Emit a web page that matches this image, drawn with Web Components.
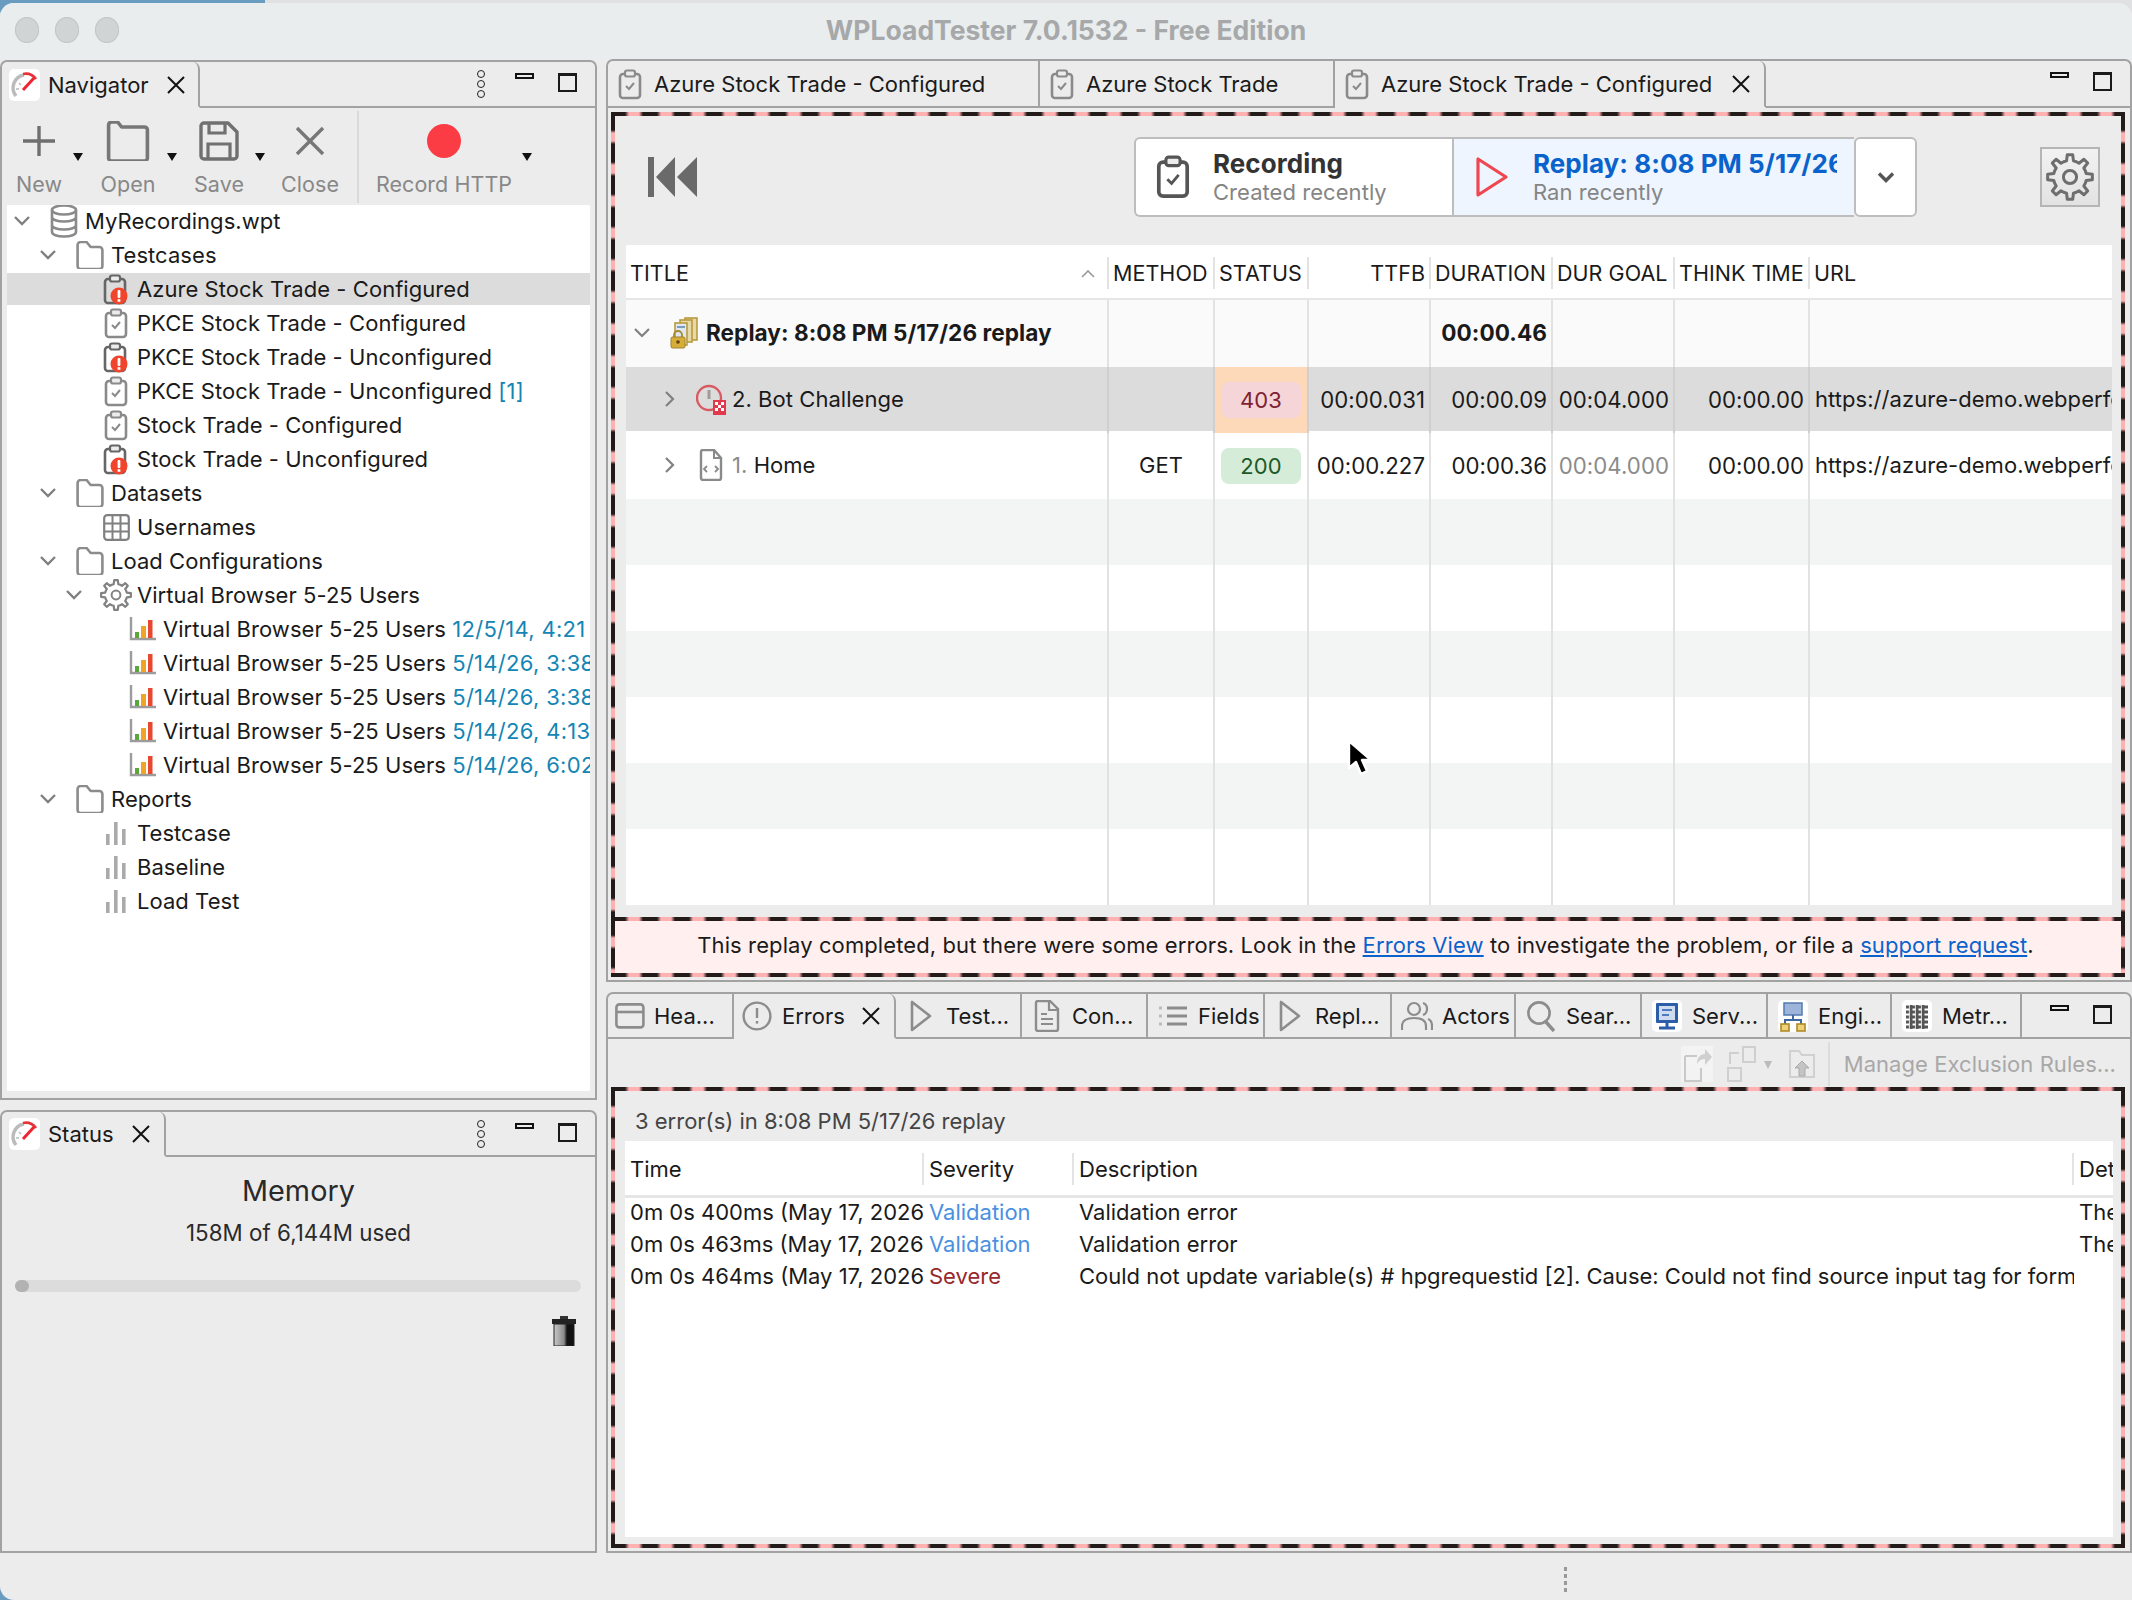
<!DOCTYPE html>
<html>
<head>
<meta charset="utf-8">
<title>WPLoadTester</title>
<style>
  html, body { margin: 0; padding: 0; }
  body {
    width: 2132px; height: 1600px; overflow: hidden;
    background: linear-gradient(90deg, #6a9cc0 0 265px, #dfe1e2 265px);
    font: 22px Inter, "Liberation Sans", sans-serif; color: #1a1a1a;
    letter-spacing: .05px;
  }
</style>
</head>
<body>
<wp-app></wp-app>

<script>
// icons, all drawn by hand
function svg(w, h, vb, body) {
  return `<svg xmlns="http://www.w3.org/2000/svg" width="${w}" height="${h}" viewBox="${vb}" style="display:block">${body}</svg>`;
}
function gearPath(cx, cy, ro, ri, teeth) {
  let d = '';
  const step = Math.PI * 2 / teeth;
  for (let i = 0; i < teeth; i++) {
    const a = i * step - Math.PI / 2;
    const pts = [[ri, a - step * .5], [ri, a - step * .27], [ro, a - step * .15], [ro, a + step * .15], [ri, a + step * .27]];
    pts.forEach((p, j) => {
      d += (i === 0 && j === 0 ? 'M' : 'L') + (cx + p[0] * Math.cos(p[1])).toFixed(1) + ' ' + (cy + p[0] * Math.sin(p[1])).toFixed(1);
    });
  }
  return d + 'Z';
}
const clipBody = (c, check) => `<rect x="2" y="5" width="20" height="24" rx="3" fill="none" stroke="${c}" stroke-width="2.6"/><rect x="7" y="1.5" width="10" height="6" rx="2" fill="#ececec" stroke="${c}" stroke-width="2.2"/>${check ? `<path d="M8 17l3 3 5-6" fill="none" stroke="${c}" stroke-width="2"/>` : ''}`;
const errDot = `<circle cx="16" cy="22" r="8.5" fill="#f0442c"/><rect x="14.6" y="16" width="2.8" height="8" rx="1" fill="#fff"/><rect x="14.6" y="25.2" width="2.8" height="2.6" fill="#fff"/>`;
const folderPath = (w, h, c, sw) => `<path d="M${sw} ${h - 3}V4a3 3 0 0 1 3-3h6l4 5h${w - 16 - 2 * sw}a3 3 0 0 1 3 3v${h - 12}a3 3 0 0 1-3 3H${sw + 3}a3 3 0 0 1-3-3z" fill="none" stroke="${c}" stroke-width="${sw}" stroke-linejoin="round"/>`;
const gaugeIcon = svg(31, 32, '0 0 31 32', `<rect width="31" height="32" rx="5" fill="#fff"/><path d="M7 27A13 13 0 0 1 15 6" fill="none" stroke="#bbb" stroke-width="3.5"/><path d="M14 5a13 13 0 0 1 13 5" fill="none" stroke="#e8323a" stroke-width="2.6"/><path d="M14 21l11-12" stroke="#ee2530" stroke-width="3"/><path d="M10 14l2 2M7 20l3 0" stroke="#bbb" stroke-width="1.6"/>`);

const ICONS = {
  gauge: gaugeIcon,
  plus: svg(32, 32, '0 0 32 32', `<path d="M16 1v30M0 16h32" stroke="#6f6f6f" stroke-width="3.4"/>`),
  folderBig: svg(46, 40, '0 0 46 40', folderPath(46, 40, '#777', 3.6)),
  save: svg(40, 40, '0 0 40 40', `<path d="M2 5a3 3 0 0 1 3-3h24l9 9v24a3 3 0 0 1-3 3H5a3 3 0 0 1-3-3z" fill="none" stroke="#707070" stroke-width="3.4" stroke-linejoin="round"/><path d="M10 3v9h16V3M9 37V23h22v14" fill="none" stroke="#707070" stroke-width="3.2"/>`),
  closeBig: svg(30, 30, '0 0 30 30', `<path d="M2 2l26 26M28 2L2 28" stroke="#777" stroke-width="3.4"/>`),
  rec: svg(36, 36, '0 0 36 36', `<circle cx="18" cy="18" r="17" fill="#fb3c44"/>`),
  db: svg(28, 34, '0 0 28 34', `<g fill="none" stroke="#8a8a8a" stroke-width="2.6"><ellipse cx="14" cy="6" rx="12" ry="4.5"/><path d="M2 6v22c0 2.5 5 4.5 12 4.5s12-2 12-4.5V6M2 13c0 2.5 5 4.5 12 4.5s12-2 12-4.5M2 21c0 2.5 5 4.5 12 4.5s12-2 12-4.5"/></g>`),
  folder: svg(30, 28, '0 0 30 28', folderPath(30, 28, '#8c8c8c', 2.6)),
  clip: svg(24, 31, '0 0 24 31', clipBody('#8a8a8a', true)),
  clipDark: svg(36, 44, '0 0 24 31', clipBody('#555', true)),
  clipErr: svg(26, 31, '0 0 26 31', clipBody('#666', false) + errDot),
  grid: svg(27, 27, '0 0 27 27', `<rect x="1.2" y="1.2" width="24.6" height="24.6" rx="3" fill="none" stroke="#808080" stroke-width="2.2"/><path d="M1 9.5h25M1 17.5h25M9.5 1v25M17.5 1v25" stroke="#808080" stroke-width="2"/>`),
  gear: svg(32, 32, '0 0 32 32', `<path d="${gearPath(16, 16, 15, 11, 8)}" fill="none" stroke="#828282" stroke-width="2.2" stroke-linejoin="round"/><circle cx="16" cy="16" r="4.4" fill="none" stroke="#828282" stroke-width="2"/>`),
  gearBig: svg(48, 48, '0 0 32 32', `<path d="${gearPath(16, 16, 15, 11, 8)}" fill="none" stroke="#6e6e6e" stroke-width="2" stroke-linejoin="round"/><circle cx="16" cy="16" r="4.4" fill="none" stroke="#6e6e6e" stroke-width="2"/>`),
  chart: svg(27, 24, '0 0 27 24', `<path d="M2 0v22h25" fill="none" stroke="#9c9c9c" stroke-width="2.4"/><rect x="6" y="15" width="4" height="6" fill="#5aa83c"/><rect x="12" y="9" width="5" height="12" fill="#f0a326"/><rect x="19" y="3" width="4.5" height="18" fill="#e8492e"/>`),
  bars: svg(22, 26, '0 0 22 26', `<rect x="1" y="14" width="3.6" height="11" fill="#aaa"/><rect x="9" y="2" width="3.6" height="23" fill="#aaa"/><rect x="17" y="9" width="3.6" height="16" fill="#aaa"/>`),
  skip: svg(50, 40, '0 0 50 40', `<rect width="6" height="40" fill="#6a6a6a"/><path d="M27 0v40L8 20zM49 0v40L29 20z" fill="#6a6a6a"/>`),
  playRed: svg(32, 40, '0 0 32 40', `<path d="M2 2v36l28-18z" fill="none" stroke="#f04650" stroke-width="3.2" stroke-linejoin="round"/>`),
  stack: svg(28, 32, '0 0 28 32', `<g stroke="#b89a3c" stroke-width="1.6" fill="#e7d9a8"><rect x="15" y="1" width="12" height="22"/><rect x="10" y="3" width="12" height="22"/></g><rect x="5" y="6" width="12" height="22" fill="#dfe7f0" stroke="#b89a3c" stroke-width="1.6"/><path d="M7 10h8" stroke="#7d9ac0" stroke-width="2"/><path d="M4 21v-3a4 4 0 0 1 8 0v3" fill="none" stroke="#a88a30" stroke-width="1.8"/><rect x="1" y="20" width="14" height="11" rx="1.5" fill="#d7ad3a" stroke="#a0802a"/><circle cx="8" cy="25" r="1.8" fill="#5c4512"/>`),
  bot: svg(30, 32, '0 0 30 32', `<circle cx="13" cy="15" r="12" fill="none" stroke="#d85a62" stroke-width="2.4"/><rect x="11.5" y="7" width="3" height="9" fill="#a09a9a"/><rect x="17" y="17" width="13" height="15" fill="#e23a4c"/><path d="M19 19h3v3h-3zM25 19h3v3h-3zM22 22h3v3h-3zM19 25h3v3h-3zM25 25h3v3h-3z" fill="#fff"/>`),
  page: svg(24, 32, '0 0 24 32', `<path d="M2 3a2 2 0 0 1 2-2h11l7 8v20a2 2 0 0 1-2 2H4a2 2 0 0 1-2-2z" fill="none" stroke="#8a8a8a" stroke-width="2.4"/><path d="M15 1v8h7" fill="none" stroke="#8a8a8a" stroke-width="2"/><path d="M8 17l-3 3 3 3M16 17l3 3-3 3" fill="none" stroke="#8a8a8a" stroke-width="1.8"/>`),
  head: svg(30, 26, '0 0 30 26', `<rect x="1.4" y="1.4" width="27" height="23" rx="3" fill="none" stroke="#8c8c8c" stroke-width="2.6"/><path d="M1 9h28" stroke="#8c8c8c" stroke-width="2.6"/>`),
  err: svg(30, 30, '0 0 30 30', `<circle cx="15" cy="15" r="13.4" fill="none" stroke="#8c8c8c" stroke-width="2.4"/><rect x="13.8" y="7" width="2.4" height="10" fill="#8c8c8c"/><rect x="13.8" y="20" width="2.4" height="2.6" fill="#8c8c8c"/>`),
  play: svg(22, 32, '0 0 22 32', `<path d="M2 2v28l18-14z" fill="none" stroke="#8c8c8c" stroke-width="2.6" stroke-linejoin="round"/>`),
  doc: svg(26, 32, '0 0 26 32', `<path d="M2 3a2 2 0 0 1 2-2h12l8 8v20a2 2 0 0 1-2 2H4a2 2 0 0 1-2-2z" fill="none" stroke="#8c8c8c" stroke-width="2.4"/><path d="M15 1v9h9M7 14h6M7 19h12M7 24h12" fill="none" stroke="#8c8c8c" stroke-width="2.2"/>`),
  list: svg(28, 22, '0 0 28 22', `<path d="M8 3h20M8 11h20M8 19h20" stroke="#8c8c8c" stroke-width="3"/><path d="M0 3h3M0 11h3M0 19h3" stroke="#bbb" stroke-width="3"/>`),
  actors: svg(32, 30, '0 0 32 30', `<g fill="none" stroke="#8c8c8c" stroke-width="2.2"><circle cx="13" cy="8" r="6"/><path d="M1 29v-4c0-5 4-8 12-8s12 3 12 8v4M22 2c3 1 4 4 4 6s-1 5-4 6M27 18c3 1 4 4 4 7v4"/></g>`),
  search: svg(28, 32, '0 0 28 32', `<circle cx="12" cy="13" r="10.6" fill="none" stroke="#8c8c8c" stroke-width="2.6"/><path d="M19 22l8 9" stroke="#8c8c8c" stroke-width="3.4"/>`),
  server: svg(30, 32, '0 0 30 32', `<rect width="30" height="32" rx="5" fill="#fff"/><rect x="4" y="3" width="22" height="20" rx="1" fill="#2c5ea8"/><rect x="7" y="6" width="16" height="14" fill="#cfdcf0"/><path d="M10 10h10M10 15h7" stroke="#4f7cc0" stroke-width="2"/><path d="M15 23v4M7 28h16" stroke="#2c5ea8" stroke-width="3"/>`),
  engine: svg(30, 32, '0 0 30 32', `<rect width="30" height="32" rx="5" fill="#fff"/><rect x="6" y="3" width="18" height="12" fill="#9db5da" stroke="#5479b0" stroke-width="1.5"/><path d="M15 15v5M7 25v-5h16v5" fill="none" stroke="#3f67a0" stroke-width="2"/><rect x="3" y="24" width="8" height="7" fill="#f0d078" stroke="#ad8a22" stroke-width="1.6"/><rect x="19" y="24" width="8" height="7" fill="#f0d078" stroke="#ad8a22" stroke-width="1.6"/>`),
  metric: svg(30, 32, '0 0 30 32', `<rect width="30" height="32" rx="5" fill="#fff"/><path d="M4 7h22M4 12h22M4 17h22M4 22h22M4 27h22M9 5v24M15 5v24M21 5v24" stroke="#555" stroke-width="3"/><path d="M7.4 5v24M13.4 5v24M19.4 5v24" stroke="#fff" stroke-width=".8"/>`),
  trash: svg(24, 30, '0 0 24 30', `<defs><linearGradient id="tr" x1="0" x2="1"><stop offset="0" stop-color="#c8c8c8"/><stop offset=".5" stop-color="#8a8a8a"/><stop offset=".65" stop-color="#111"/></linearGradient></defs><rect x="8" y="0" width="8" height="4" fill="#333"/><rect x="0" y="3" width="24" height="5" fill="#222"/><rect x="2" y="8" width="20" height="22" fill="url(#tr)" stroke="#222"/>`),
  share: svg(32, 36, '0 0 32 36', `<rect x="0" y="0" width="32" height="36" fill="#f3f3f3"/><path d="M4 10h12M4 10v25h16V22" fill="none" stroke="#c9c9c9" stroke-width="2"/><path d="M16 18c0-7 4-10 8-10V3l7 8-7 8v-6c-3 0-6 1-8 5z" fill="#cfcfcf"/>`),
  layout: svg(30, 36, '0 0 30 36', `<g fill="none" stroke="#cfcfcf" stroke-width="2"><rect x="17" y="1" width="12" height="15"/><rect x="2" y="22" width="13" height="13"/><path d="M4 18V7h9"/></g>`),
  fold: svg(28, 34, '0 0 28 34', `<path d="M2 30V4h9l3 4h12v22z" fill="none" stroke="#d0d0d0" stroke-width="2"/><path d="M14 14l7 7h-4v8h-6v-8H7z" fill="#c4c4c4" stroke="#aaa"/>`),
  cursor: svg(26, 40, '0 0 26 40', `<path d="M3 2v27l7-6 5 12 6-3-5-11h9z" fill="#000" stroke="#fff" stroke-width="2.4" stroke-linejoin="round"/>`)
};

class WpIcon extends HTMLElement {
  connectedCallback() {
    this.attachShadow({ mode: 'open' });
    this.shadowRoot.innerHTML = `<style>:host{display:inline-flex;align-items:center;justify-content:center;flex:none}</style>${ICONS[this.getAttribute('name')] || ''}`;
  }
}

class WpTitlebar extends HTMLElement {
  constructor() {
    super();
    this.attachShadow({ mode: 'open' });
    this.shadowRoot.innerHTML = `
      <style>
        :host { display: flex; align-items: center; position: relative; height: 56px; background: #e9edee; }
        .lights { display: flex; gap: 16px; padding-left: 15px; margin-top: -2px; }
        .lights i { width: 24px; height: 26px; border-radius: 50%; background: #d1d4d5; box-shadow: inset 0 0 0 1px #c3c6c7; }
        .t { position: absolute; left: 0; right: 0; top: 12px; text-align: center; font-weight: 700; font-size: 26.5px; line-height: 30px; color: #a6a8a9; letter-spacing: 0; }
      </style>
      <div class="lights"><i></i><i></i><i></i></div>
      <div class="t"><slot></slot></div>`;
  }
}

// panel: tab strip with view buttons on its right, then the body
class WpPanel extends HTMLElement {
  constructor() {
    super();
    this.attachShadow({ mode: 'open' });
    this.shadowRoot.innerHTML = `
      <style>
        :host { display: flex; flex-direction: column; box-sizing: border-box; border: 2px solid #a2a2a2; border-radius: 7px 7px 0 0; background: #ececec; min-height: 0; }
        .strip { display: flex; height: var(--strip, 47px); flex: none; }
        .fill { flex: 1; border-bottom: 2px solid #a2a2a2; display: flex; justify-content: flex-end; align-items: flex-start; padding-top: 8px; box-sizing: border-box; }
        .dots { display: flex; flex-direction: column; gap: 2px; margin-right: 30px; }
        .dots i { width: 6px; height: 6px; border: 1.5px solid #222; border-radius: 50%; }
        .min { width: 15px; height: 2px; border: 2px solid #111; margin-top: 3px; margin-right: 24px; }
        .max { width: 15px; height: 14px; border: 2px solid #1a1a1a; border-top-width: 3px; margin-top: 3px; }
        .end { width: 18px; flex: none; }
        .body { flex: 1; min-height: 0; display: flex; flex-direction: column; }
        :host([nodots]) .dots { display: none; }
      </style>
      <div class="strip">
        <slot name="tabs"></slot>
        <div class="fill">
          <div class="dots"><i></i><i></i><i></i></div>
          <div class="min"></div><div class="max"></div><div class="end"></div>
        </div>
      </div>
      <div class="body"><slot></slot></div>`;
  }
}

class WpTab extends HTMLElement {
  connectedCallback() {
    const icon = this.getAttribute('icon');
    const box = this.getAttribute('box') || '32';
    const closable = this.hasAttribute('close');
    this.attachShadow({ mode: 'open' });
    this.shadowRoot.innerHTML = `
      <style>
        :host { display: flex; align-items: center; box-sizing: border-box; height: var(--strip, 47px); width: ${this.getAttribute('w')}px; flex: none; padding: 1px 0 0 6px; border-right: 2px solid #a2a2a2; border-bottom: 2px solid #a2a2a2; font-size: 22px; white-space: nowrap; overflow: hidden; letter-spacing: 0; }
        :host([active]) { border-bottom-color: transparent; border-top-right-radius: 7px; }
        .ic { width: ${box}px; display: flex; justify-content: center; margin-right: 8px; flex: none; }
        .x { margin-left: auto; margin-right: var(--x-right, 14px); }
      </style>
      <span class="ic"><wp-icon name="${icon}"></wp-icon></span><slot></slot>
      ${closable ? `<svg class="x" width="18" height="18" viewBox="0 0 18 18"><path d="M1 1l16 16M17 1L1 17" stroke="#111" stroke-width="2"/></svg>` : ''}`;
  }
}

class ToolButton extends HTMLElement {
  connectedCallback() {
    const caret = this.getAttribute('caret');
    this.attachShadow({ mode: 'open' });
    this.shadowRoot.innerHTML = `
      <style>
        :host { display: flex; flex-direction: column; align-items: center; position: relative; flex: none; color: #888; font-size: 21.5px; padding-top: 13px; box-sizing: border-box; height: 97px; }
        .i { height: 40px; display: flex; align-items: center; }
        .l { margin-top: 10px; line-height: 26px; white-space: nowrap; }
        .c { position: absolute; left: ${caret}px; top: 45px; width: 0; height: 0; border: 5px solid transparent; border-top: 8px solid #111; border-bottom: 0; }
      </style>
      <div class="i"><slot></slot></div>
      <div class="l">${this.getAttribute('label')}</div>
      ${caret ? '<div class="c"></div>' : ''}`;
  }
}

class TreeRow extends HTMLElement {
  connectedCallback() {
    const lvl = +this.getAttribute('level');
    const open = this.hasAttribute('open');
    this.attachShadow({ mode: 'open' });
    this.shadowRoot.innerHTML = `
      <style>
        :host { display: flex; align-items: center; box-sizing: border-box; height: 34px; padding-left: ${2 + 26 * lvl}px; white-space: nowrap; font-size: 22px; border-bottom: 2px solid transparent; background-clip: padding-box; }
        :host([sel]) { background-color: #dcdcdc; }
        .ch { width: 26px; flex: none; display: flex; justify-content: center; }
        .ic { width: 36px; margin-left: 11px; flex: none; display: flex; justify-content: center; margin-right: 3px; }
        ::slotted(b) { font-weight: 400; color: #1485b4; letter-spacing: .3px; }
      </style>
      <span class="ch">${open ? `<svg width="16" height="10" viewBox="0 0 16 10"><path d="M1 1l7 7 7-7" fill="none" stroke="#808080" stroke-width="2.4"/></svg>` : ''}</span>
      <span class="ic"><wp-icon name="${this.getAttribute('icon')}"></wp-icon></span>
      <span><slot></slot></span>`;
  }
}

class NavTree extends HTMLElement {
  constructor() {
    super();
    this.attachShadow({ mode: 'open' });
    this.shadowRoot.innerHTML = `
      <style>:host { display: block; flex: 1; background: #fff; margin: 0 5px 7px 5px; overflow: hidden; min-height: 0; }</style>
      <slot></slot>`;
  }
}

// black and pink dashed frame the app draws round problem areas
const DASH_H = 'repeating-linear-gradient(90deg, #231a1a 0 14px, #ffb0b0 18px 28px, #231a1a 32px)';
const DASH_V = 'repeating-linear-gradient(180deg, #231a1a 0 18px, #ffb0b0 21px 29px, #231a1a 32px)';

class DashBox extends HTMLElement {
  constructor() {
    super();
    this.attachShadow({ mode: 'open' });
    this.shadowRoot.innerHTML = `
      <style>
        :host {
          display: flex; flex-direction: column; box-sizing: border-box; min-height: 0; padding: 4px;
          background:
            ${DASH_H} top / 100% 4px no-repeat,
            ${DASH_H} bottom / 100% 4px no-repeat,
            ${DASH_V} left / 4px 100% no-repeat,
            ${DASH_V} right / 4px 100% no-repeat;
        }
        :host([open-bottom]) { padding-bottom: 0; background:
            ${DASH_H} top / 100% 4px no-repeat,
            ${DASH_V} left / 4px 100% no-repeat,
            ${DASH_V} right / 4px 100% no-repeat; }
      </style>
      <slot></slot>`;
  }
}

class ReplayBar extends HTMLElement {
  constructor() {
    super();
    this.attachShadow({ mode: 'open' });
    this.shadowRoot.innerHTML = `
      <style>
        :host { display: flex; align-items: flex-start; height: 129px; flex: none; box-sizing: border-box; padding: 21px 0 0 33px; position: relative; }
        .skip { margin-top: 20px; }
        .card { display: flex; margin-left: 436px; height: 80px; box-sizing: border-box; border: 2px solid #bdbdbd; border-right: 0; border-radius: 6px 0 0 6px; background: #fff; }
        .a { width: 318px; display: flex; align-items: center; box-sizing: border-box; padding-left: 19px; border-right: 2px solid #bdbdbd; }
        .b { width: 400px; display: flex; align-items: center; box-sizing: border-box; padding-left: 22px; background: #eef5fe; }
        .tx { margin-left: 22px; overflow: hidden; }
        .b .tx { margin-left: 25px; width: 304px; }
        .h { font-size: 26px; font-weight: 700; line-height: 31px; color: #333; white-space: nowrap; }
        .b .h { color: #0a63cc; }
        .s { font-size: 22px; line-height: 27px; color: #858585; white-space: nowrap; }
        .drop { width: 63px; height: 80px; box-sizing: border-box; border: 2px solid #bdbdbd; border-radius: 6px; background: #fff; display: flex; align-items: center; justify-content: center; }
        .gear { margin-left: 123px; margin-top: 10px; width: 60px; height: 60px; box-sizing: border-box; border: 2px solid #b5b5b5; background: linear-gradient(#f2f2f2, #e2e2e2); display: flex; align-items: center; justify-content: center; }
      </style>
      <wp-icon class="skip" name="skip"></wp-icon>
      <div class="card">
        <div class="a"><wp-icon name="clipDark"></wp-icon><div class="tx"><div class="h">Recording</div><div class="s">Created recently</div></div></div>
        <div class="b"><wp-icon name="playRed"></wp-icon><div class="tx"><div class="h">Replay: 8:08 PM 5/17/26</div><div class="s">Ran recently</div></div></div>
      </div>
      <div class="drop"><svg width="18" height="11" viewBox="0 0 18 11"><path d="M2 1.5l7 7 7-7" fill="none" stroke="#555" stroke-width="3.4"/></svg></div>
      <div class="gear"><wp-icon name="gearBig"></wp-icon></div>`;
  }
}

const REPLAY_COLS = '483px 106px 94px 122px 122px 122px 135px 1fr';

class ReplayTable extends HTMLElement {
  constructor() {
    super();
    this.attachShadow({ mode: 'open' });
    this.shadowRoot.innerHTML = `
      <style>
        :host { display: block; flex: 1; min-height: 0; margin: 0 9px 12px 11px; background: #fff; overflow: hidden; }
        .hd { display: grid; grid-template-columns: ${REPLAY_COLS}; height: 53px; border-bottom: 2px solid #e6e6e6; align-items: center; font-size: 21.5px; white-space: nowrap; }
        .hd div { height: 32px; line-height: 32px; border-right: 2px solid #e2e2e2; box-sizing: border-box; padding-left: 4px; position: relative; overflow: hidden; margin-top: 2px; }
        .hd div:last-child { border: 0; }
        .hd .r { text-align: right; padding-right: 4px; }
        .hd svg { position: absolute; right: 12px; top: 13px; }
      </style>
      <div class="hd">
        <div>TITLE<svg width="14" height="8" viewBox="0 0 14 8"><path d="M1 7l6-6 6 6" fill="none" stroke="#999" stroke-width="1.6"/></svg></div>
        <div>METHOD</div><div>STATUS</div><div class="r">TTFB</div><div>DURATION</div><div>DUR GOAL</div><div>THINK TIME</div><div>URL</div>
      </div>
      <slot></slot>`;
  }
}

class ReplayRow extends HTMLElement {
  connectedCallback() {
    const a = n => this.getAttribute(n) || '';
    const kind = a('kind');
    const status = a('status');
    const chev = a('chev');
    const pad = a('indent') || '0';
    const chevSvg = chev === 'down'
      ? `<svg width="16" height="10" viewBox="0 0 16 10"><path d="M1 1l7 7 7-7" fill="none" stroke="#808080" stroke-width="2.2"/></svg>`
      : chev === 'right' ? `<svg width="10" height="16" viewBox="0 0 10 16"><path d="M1 1l7 7-7 7" fill="none" stroke="#808080" stroke-width="2.2"/></svg>` : '';
    this.attachShadow({ mode: 'open' });
    this.shadowRoot.innerHTML = `
      <style>
        :host { display: grid; grid-template-columns: ${REPLAY_COLS}; height: ${a('h') || 66}px; background: ${a('bg') || '#fff'}; font-size: 22px; white-space: nowrap; box-sizing: border-box; }
        :host([kind=group]) .ic { margin: 0 7px 0 15px; }
        .c { border-right: 2px solid ${a('line') || '#e2e2e2'}; box-sizing: border-box; display: flex; align-items: center; overflow: hidden; min-width: 0; padding-bottom: 2px; }
        .c:last-child { border: 0; padding-left: 5px; }
        .r { justify-content: flex-end; padding-right: 4px; font-size: 22.2px; }
        .m { justify-content: center; }
        .t { padding-left: ${pad}px; }
        .cv { width: 24px; display: flex; justify-content: center; flex: none; }
        .ic { width: 30px; margin: 0 6px 0 14px; display: flex; justify-content: center; flex: none; }
        .dim { color: #8b8b8b; }
        .st { justify-content: center; padding-bottom: 0; }
        .pill { width: 80px; height: 36px; line-height: 36px; text-align: center; border-radius: 8px; font-size: 22px; }
        .p403 { background: #f5d5d8; color: #7d2232; }
        .p200 { background: #d5ecd9; color: #1d5a28; }
        .hot { background: #fdd8b9; }
        .bold { font-weight: 700; font-size: 22.6px; }
      </style>
      <div class="c t ${kind === 'group' ? 'bold' : ''}">
        ${chev ? `<span class="cv">${chevSvg}</span><span class="ic"><wp-icon name="${a('icon')}"></wp-icon></span>` : ''}
        <span><slot></slot></span>
      </div>
      <div class="c m">${a('method')}</div>
      <div class="c st ${status === '403' ? 'hot' : ''}">${status ? `<div class="pill p${status}">${status}</div>` : ''}</div>
      <div class="c r">${a('ttfb')}</div>
      <div class="c r ${kind === 'group' ? 'bold' : ''}">${a('dur')}</div>
      <div class="c r ${a('goaldim') ? 'dim' : ''}">${a('goal')}</div>
      <div class="c r">${a('think')}</div>
      <div class="c">${a('url')}</div>`;
  }
}

class ErrorBanner extends HTMLElement {
  constructor() {
    super();
    this.attachShadow({ mode: 'open' });
    this.shadowRoot.innerHTML = `
      <style>
        :host { display: block; background: #fff0ef; height: 52px; line-height: 48px; text-align: center; font-size: 22px; white-space: nowrap; letter-spacing: .1px; padding-right: 5px; box-sizing: border-box; }
        ::slotted(a) { color: #0a63cc; text-decoration: underline; }
      </style>
      <slot></slot>`;
  }
}

class ErrorTable extends HTMLElement {
  constructor() {
    super();
    const rows = [
      ['0m 0s 400ms (May 17, 2026', 'Validation', 'Validation error', 'The'],
      ['0m 0s 463ms (May 17, 2026', 'Validation', 'Validation error', 'The'],
      ['0m 0s 464ms (May 17, 2026', 'Severe', 'Could not update variable(s) # hpgrequestid [2]. Cause: Could not find source input tag for form', '']
    ];
    this.attachShadow({ mode: 'open' });
    this.shadowRoot.innerHTML = `
      <style>
        :host { display: block; flex: 1; min-height: 0; margin: 0 8px 7px 10px; background: #fff; overflow: hidden; font-size: 22px; white-space: nowrap; letter-spacing: 0; }
        .g { display: grid; grid-template-columns: 299px 150px 1000px 1fr; }
        .hd { height: 54px; align-items: center; border-bottom: 3px solid #e6e6e6; box-sizing: content-box; }
        .hd div { height: 32px; line-height: 32px; padding-left: 5px; border-right: 2px solid #e4e4e4; overflow: hidden; margin-top: 1px; }
        .hd div:last-child { border: 0; }
        .r { height: 32px; line-height: 32px; }
        .r:nth-of-type(2) { margin-top: -2px; }
        .r div { overflow: hidden; padding-left: 5px; }
        .Validation { color: #4a90e2; }
        .Severe { color: #96282e; }
      </style>
      <div class="g hd"><div>Time</div><div>Severity</div><div>Description</div><div>Details</div></div>
      ${rows.map(r => `<div class="g r"><div>${r[0]}</div><div class="${r[1]}">${r[1]}</div><div>${r[2]}</div><div>${r[3]}</div></div>`).join('')}`;
  }
}

class MemoryStatus extends HTMLElement {
  constructor() {
    super();
    this.attachShadow({ mode: 'open' });
    this.shadowRoot.innerHTML = `
      <style>
        :host { display: flex; flex-direction: column; flex: 1; align-items: center; color: #2a2a2a; }
        .h { font-size: 28.8px; line-height: 36px; margin-top: 16px; }
        .u { font-size: 22.3px; line-height: 28px; margin-top: 10px; }
        .track { align-self: stretch; margin: 33px 14px 0 13px; height: 12px; background: #dcdcdc; border-radius: 6px; }
        .thumb { width: 14px; height: 12px; background: #b2b2b2; border-radius: 6px; }
        .bin { align-self: flex-end; margin: 24px 19px 0 0; }
      </style>
      <div class="h">Memory</div>
      <div class="u">158M of 6,144M used</div>
      <div class="track"><div class="thumb"></div></div>
      <wp-icon class="bin" name="trash"></wp-icon>`;
  }
}

class ErrorsBar extends HTMLElement {
  constructor() {
    super();
    this.attachShadow({ mode: 'open' });
    this.shadowRoot.innerHTML = `
      <style>
        :host { display: flex; justify-content: flex-end; align-items: center; height: 48px; flex: none; box-sizing: border-box; padding: 2px 14px 0 0; color: #a8a8a8; font-size: 22px; white-space: nowrap; }
        wp-icon { margin-right: 13px; }
        .car { width: 0; height: 0; border: 4px solid transparent; border-top: 8px solid #bbb; border-bottom: 0; margin: 2px 16px 0 -5px; }
        .fold { margin-right: 12px; }
        .sep { width: 2px; height: 44px; background: #dcdcdc; margin: 0 14px 0 0; }
      </style>
      <wp-icon name="share"></wp-icon><wp-icon name="layout"></wp-icon><div class="car"></div><wp-icon class="fold" name="fold"></wp-icon>
      <div class="sep"></div>Manage Exclusion Rules...`;
  }
}

class WpApp extends HTMLElement {
  constructor() {
    super();
    this.attachShadow({ mode: 'open' });
    this.shadowRoot.innerHTML = `
      <style>
        :host { display: flex; flex-direction: column; height: 1597px; margin-top: 3px; background: #ececec; border-radius: 14px 14px 0 14px; overflow: hidden; position: relative; }
        .main { display: flex; gap: 9px; height: 1494px; }
        .left { width: 597px; flex: none; display: flex; flex-direction: column; gap: 10px; margin-top: 1px; }
        .right { flex: 1; min-width: 0; display: flex; flex-direction: column; gap: 10px; }
        .nav { height: 1040px; flex: none; --strip: 46px; }
        .stat { flex: 1; --strip: 45px; }
        .up { height: 923px; flex: none; }
        .low { flex: 1; --strip: 45px; }
        .tools { display: flex; flex: none; }
        .sep { width: 2px; height: 92px; background: #dadada; margin: 3px 5px 0 9px; }
        .up-wrap { flex: 1; min-height: 0; display: flex; flex-direction: column; margin: 4px 5px 3px 3px; }
        .up-wrap .top { flex: 1; min-height: 0; }
        .low-wrap { flex: 1; min-height: 0; margin: 0 5px 3px 3px; }
        .lbl { font-size: 22px; color: #444; padding: 16px 0 0 20px; height: 34px; line-height: 28px; flex: none; letter-spacing: 0; }
        .grip { display: flex; flex-direction: column; gap: 3px; position: absolute; left: 1564px; bottom: 8px; }
        .grip i { width: 3px; height: 4px; background: #999; }
        .cur { position: absolute; left: 1346px; top: 736px; }
      </style>
      <wp-titlebar>WPLoadTester 7.0.1532 - Free Edition</wp-titlebar>
      <div class="main">
        <div class="left">
          <wp-panel class="nav">
            <wp-tab slot="tabs" w="198" icon="gauge" active close style="--x-right:13px">Navigator</wp-tab>
            <div class="tools">
              <tool-button label="New" caret="71" style="width:74px"><wp-icon name="plus"></wp-icon></tool-button>
              <tool-button label="Open" caret="77" style="width:76px;margin-left:14px"><wp-icon name="folderBig"></wp-icon></tool-button>
              <tool-button label="Save" caret="74" style="width:76px;margin-left:15px"><wp-icon name="save"></wp-icon></tool-button>
              <tool-button label="Close" style="width:76px;margin-left:15px"><wp-icon name="closeBig"></wp-icon></tool-button>
              <div class="sep"></div>
              <tool-button label="Record HTTP" caret="158" style="width:160px"><wp-icon name="rec"></wp-icon></tool-button>
            </div>
            <nav-tree>
              <tree-row level="0" open icon="db">MyRecordings.wpt</tree-row>
              <tree-row level="1" open icon="folder">Testcases</tree-row>
              <tree-row level="2" icon="clipErr" sel>Azure Stock Trade - Configured</tree-row>
              <tree-row level="2" icon="clip">PKCE Stock Trade - Configured</tree-row>
              <tree-row level="2" icon="clipErr">PKCE Stock Trade - Unconfigured</tree-row>
              <tree-row level="2" icon="clip">PKCE Stock Trade - Unconfigured <b>[1]</b></tree-row>
              <tree-row level="2" icon="clip">Stock Trade - Configured</tree-row>
              <tree-row level="2" icon="clipErr">Stock Trade - Unconfigured</tree-row>
              <tree-row level="1" open icon="folder">Datasets</tree-row>
              <tree-row level="2" icon="grid">Usernames</tree-row>
              <tree-row level="1" open icon="folder">Load Configurations</tree-row>
              <tree-row level="2" open icon="gear">Virtual Browser 5-25 Users</tree-row>
              <tree-row level="3" icon="chart">Virtual Browser 5-25 Users <b>12/5/14, 4:21</b></tree-row>
              <tree-row level="3" icon="chart">Virtual Browser 5-25 Users <b>5/14/26, 3:38</b></tree-row>
              <tree-row level="3" icon="chart">Virtual Browser 5-25 Users <b>5/14/26, 3:38</b></tree-row>
              <tree-row level="3" icon="chart">Virtual Browser 5-25 Users <b>5/14/26, 4:13</b></tree-row>
              <tree-row level="3" icon="chart">Virtual Browser 5-25 Users <b>5/14/26, 6:02</b></tree-row>
              <tree-row level="1" open icon="folder">Reports</tree-row>
              <tree-row level="2" icon="bars">Testcase</tree-row>
              <tree-row level="2" icon="bars">Baseline</tree-row>
              <tree-row level="2" icon="bars">Load Test</tree-row>
            </nav-tree>
          </wp-panel>
          <wp-panel class="stat">
            <wp-tab slot="tabs" w="164" icon="gauge" active close style="--x-right:14px">Status</wp-tab>
            <memory-status></memory-status>
          </wp-panel>
        </div>
        <div class="right">
          <wp-panel class="up" nodots>
            <wp-tab slot="tabs" w="432" icon="clip">Azure Stock Trade - Configured</wp-tab>
            <wp-tab slot="tabs" w="295" icon="clip">Azure Stock Trade</wp-tab>
            <wp-tab slot="tabs" w="431" icon="clip" active close style="--x-right:14px">Azure Stock Trade - Configured</wp-tab>
            <div class="up-wrap">
              <dash-box class="top" open-bottom>
                <replay-bar></replay-bar>
                <replay-table>
                  <replay-row kind="group" h="67" bg="#fafafa" chev="down" icon="stack" indent="4" dur="00:00.46">Replay: 8:08 PM 5/17/26 replay</replay-row>
                  <replay-row h="66" bg="linear-gradient(#dcdcdc 64px,#fff 64px)" line="#cfcfcf" chev="right" icon="bot" indent="32" status="403" ttfb="00:00.031" dur="00:00.09" goal="00:04.000" think="00:00.00" url="https://azure-demo.webperfo">2. Bot Challenge</replay-row>
                  <replay-row h="66" chev="right" icon="page" indent="32" method="GET" status="200" ttfb="00:00.227" dur="00:00.36" goal="00:04.000" goaldim="1" think="00:00.00" url="https://azure-demo.webperfo"><span style="color:#8b8b8b">1.</span> Home</replay-row>
                  <replay-row bg="#f3f5f4"></replay-row>
                  <replay-row></replay-row>
                  <replay-row bg="#f3f5f4"></replay-row>
                  <replay-row></replay-row>
                  <replay-row bg="#f3f5f4"></replay-row>
                  <replay-row h="76"></replay-row>
                </replay-table>
              </dash-box>
              <dash-box><error-banner>This replay completed, but there were some errors. Look in the <a>Errors View</a> to investigate the problem, or file a <a>support request</a>.</error-banner></dash-box>
            </div>
          </wp-panel>
          <wp-panel class="low" nodots>
            <wp-tab slot="tabs" w="126" icon="head">Hea...</wp-tab>
            <wp-tab slot="tabs" w="162" box="34" icon="err" active close style="--x-right:14px">Errors</wp-tab>
            <wp-tab slot="tabs" w="126" box="34" icon="play" style="padding-left:8px">Test...</wp-tab>
            <wp-tab slot="tabs" w="126" box="34" icon="doc" style="padding-left:8px">Con...</wp-tab>
            <wp-tab slot="tabs" w="117" box="34" icon="list" style="padding-left:8px">Fields</wp-tab>
            <wp-tab slot="tabs" w="127" box="34" icon="play" style="padding-left:8px">Repl...</wp-tab>
            <wp-tab slot="tabs" w="124" box="34" icon="actors" style="padding-left:8px">Actors</wp-tab>
            <wp-tab slot="tabs" w="126" box="34" icon="search" style="padding-left:8px">Sear...</wp-tab>
            <wp-tab slot="tabs" w="126" box="34" icon="server" style="padding-left:8px">Serv...</wp-tab>
            <wp-tab slot="tabs" w="124" box="34" icon="engine" style="padding-left:8px">Engi...</wp-tab>
            <wp-tab slot="tabs" w="130" box="34" icon="metric" style="padding-left:8px">Metr...</wp-tab>
            <errors-bar></errors-bar>
            <dash-box class="low-wrap">
              <div class="lbl">3 error(s) in 8:08 PM 5/17/26 replay</div>
              <error-table></error-table>
            </dash-box>
          </wp-panel>
        </div>
      </div>
      <div class="grip"><i></i><i></i><i></i><i></i></div>
      <wp-icon class="cur" name="cursor"></wp-icon>`;
  }
}

customElements.define('wp-icon', WpIcon);
customElements.define('wp-titlebar', WpTitlebar);
customElements.define('wp-panel', WpPanel);
customElements.define('wp-tab', WpTab);
customElements.define('tool-button', ToolButton);
customElements.define('tree-row', TreeRow);
customElements.define('nav-tree', NavTree);
customElements.define('dash-box', DashBox);
customElements.define('replay-bar', ReplayBar);
customElements.define('replay-table', ReplayTable);
customElements.define('replay-row', ReplayRow);
customElements.define('error-banner', ErrorBanner);
customElements.define('error-table', ErrorTable);
customElements.define('memory-status', MemoryStatus);
customElements.define('errors-bar', ErrorsBar);
customElements.define('wp-app', WpApp);
</script>
</body>
</html>
